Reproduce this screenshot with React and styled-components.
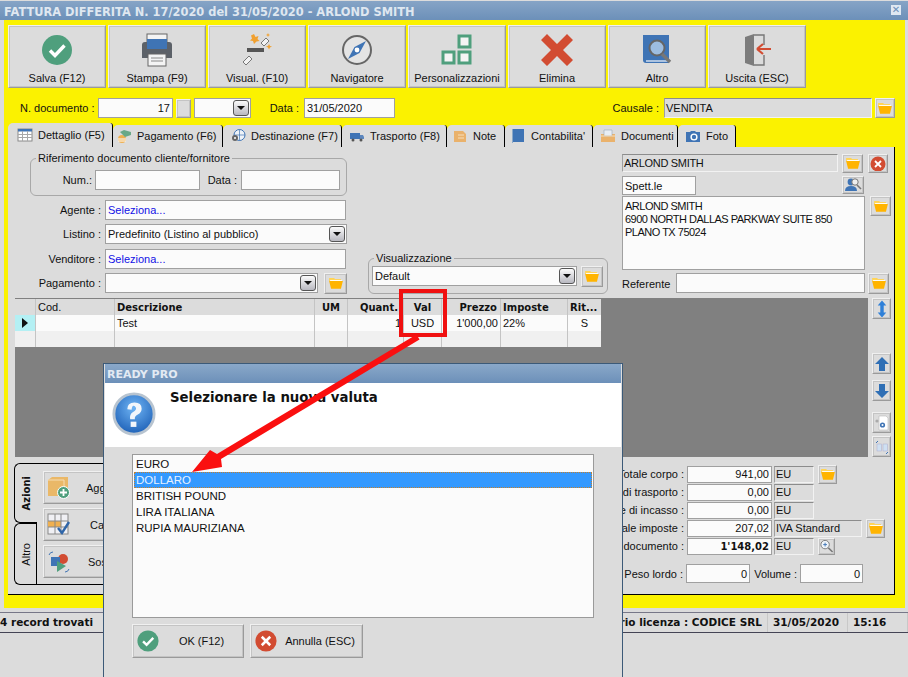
import React from 'react'
import styled, { createGlobalStyle, css } from 'styled-components'

const GlobalStyle = createGlobalStyle`
  html, body { margin: 0; padding: 0; background: #dcdcdc; }
  body {
    font-family: "Liberation Sans", "DejaVu Sans", sans-serif;
    font-size: 11px;
    color: #111;
  }
`

const boldText = css`
  font-family: "DejaVu Sans", sans-serif;
  font-size: 10px;
  font-weight: bold;
`

const Screen = styled.div`
  position: relative;
  width: 908px;
  height: 677px;
  overflow: hidden;
  background: #dcdcdc;
`

const TitleBar = styled.div`
  box-sizing: border-box;
  height: 19px;
  margin-top: 1px;
  padding: 2px 4px 0;
  display: flex;
  align-items: center;
  justify-content: space-between;
  background: linear-gradient(#86a4c6, #6c90b9);
  color: #dfe7f0;
  font-family: "DejaVu Sans", sans-serif;
  font-weight: bold;
  font-size: 11.4px;
`

const CloseMark = styled.span`
  width: 10px;
  height: 10px;
  margin: -3px 3px 0 0;
  background: #dfe8f2;
  color: #6c90b9;
  font-size: 10px;
  line-height: 10px;
  text-align: center;
`

const YellowFrame = styled.div`
  margin-left: 4px;
  width: 901px;
  height: 588px;
  padding: 5px 0 0 4px;
  box-sizing: border-box;
  background: #fbf200;
`

const Toolbar = styled.div`
  display: flex;
  gap: 2px;
`

const Bevel = styled.button`
  box-sizing: border-box;
  padding: 0;
  font: inherit;
  color: inherit;
  background: #dcdcdc;
  border: 1px solid;
  border-color: #f0f0f0 #9a9a9a #9a9a9a #f0f0f0;
  outline: 1px solid #c4c4c4;
  outline-offset: -2px;
  display: flex;
  align-items: center;
  justify-content: center;
  flex: none;
`

const ToolButton = styled(Bevel)`
  width: 98px;
  height: 63px;
  flex-direction: column;
  justify-content: flex-start;
  padding-top: 7px;
  gap: 5px;
  svg { width: 34px; height: 34px; }
`

const SmallButton = styled(Bevel)`
  width: ${p => p.$w || 21}px;
  height: ${p => p.$h || 21}px;
  margin-left: ${p => p.$ml || 0}px;
  margin-top: ${p => p.$mt || 0}px;
`

const DocRow = styled.div`
  display: flex;
  align-items: center;
  height: 20px;
  margin-top: 10px;
  padding-left: 12px;
`

const Label = styled.span`
  width: ${p => (p.$w ? `${p.$w}px` : 'auto')};
  margin-left: ${p => p.$ml || 0}px;
  margin-right: ${p => p.$mr || 0}px;
  text-align: ${p => p.$align || 'left'};
  white-space: nowrap;
  flex: none;
`

const Field = styled.div`
  box-sizing: border-box;
  flex: none;
  width: ${p => p.$w}px;
  height: ${p => p.$h || 20}px;
  margin-left: ${p => p.$ml || 0}px;
  margin-top: ${p => p.$mt || 0}px;
  padding: 0 ${p => (p.$readonly ? 1 : 2)}px;
  display: flex;
  align-items: center;
  justify-content: ${p => (p.$right ? 'flex-end' : 'flex-start')};
  background: ${p => (p.$readonly ? '#dcdcdc' : '#fbfbfb')};
  border: 1px solid #a0a0a0;
  border-top-color: ${p => (p.$readonly ? '#8c8c8c' : '#a0a0a0')};
  border-bottom-color: ${p => (p.$readonly ? '#f2f2f2' : '#a0a0a0')};
  border-right-color: ${p => (p.$readonly ? '#f2f2f2' : '#a0a0a0')};
  color: ${p => (p.$link ? '#1212e6' : 'inherit')};
  letter-spacing: ${p => (p.$tight ? '-0.3px' : 'normal')};
  ${p => p.$bold && boldText}
  white-space: nowrap;
  overflow: hidden;
`

const SelectBox = styled(Field)`
  justify-content: space-between;
  padding-right: 1px;
`

const DropArrow = styled.span`
  box-sizing: border-box;
  width: 16px;
  height: 16px;
  flex: none;
  border: 1px solid #555;
  border-radius: 3px;
  background: linear-gradient(#fbfbfb, #b8b8c0);
  display: flex;
  align-items: center;
  justify-content: center;
  &::after {
    content: '';
    border: 4px solid transparent;
    border-top: 4px solid #111;
    border-bottom: 0;
  }
`

const Tabs = styled.div`
  display: flex;
  align-items: flex-end;
  height: 24px;
  margin-top: 5px;
`

const Tab = styled.div`
  box-sizing: border-box;
  width: ${p => p.$w}px;
  height: ${p => (p.$active ? 24 : 22)}px;
  padding-left: ${p => p.$pad}px;
  display: flex;
  align-items: center;
  gap: 5px;
  background: #dcdcdc;
  border-top-left-radius: 5px;
  border-top-right-radius: 3px;
  border-right: 1px solid #000;
  white-space: nowrap;
  svg { width: 16px; height: 16px; flex: none; }
`

const Panel = styled.div`
  box-sizing: border-box;
  width: 887px;
  height: 448px;
  background: #dcdcdc;
  border-right: 1px solid #000;
  border-bottom: 1px solid #000;
`

const FormArea = styled.div`
  display: flex;
  height: 151px;
`

const LeftForm = styled.div`
  width: 339px;
  flex: none;
  padding-top: 5px;
`

const GroupBox = styled.fieldset`
  box-sizing: border-box;
  margin: ${p => p.$margin || 0};
  width: ${p => p.$w}px;
  height: ${p => p.$h}px;
  padding: ${p => p.$top || 0}px ${p => p.$pad || 0}px 0;
  border: 1px solid #a8a8a8;
  border-radius: 6px;
  display: flex;
  align-items: flex-start;
  legend {
    margin-left: ${p => p.$legend || 0}px;
    padding: 0 2px;
    line-height: 12px;
  }
  > span { line-height: 20px; }
`

const FormRow = styled.div`
  display: flex;
  align-items: center;
  height: 20px;
  margin-top: ${p => p.$mt ?? 5}px;
`

const RowLabel = styled(Label)`
  width: 93px;
  text-align: right;
  margin-right: 4px;
`

const MiddleForm = styled.div`
  width: 240px;
  margin-left: 21px;
  flex: none;
  align-self: flex-end;
  padding-bottom: 4px;
`

const RightForm = styled.div`
  margin-left: 14px;
  flex: 1;
  padding-top: 7px;
`

const RightRow = styled.div`
  display: flex;
  align-items: flex-start;
  margin-top: ${p => p.$mt || 0}px;
  > span { line-height: 22px; }
`

const AddressBox = styled(Field)`
  display: block;
  padding: 3px 2px;
  line-height: 13px;
  letter-spacing: -0.5px;
`

const GridZone = styled.div`
  display: flex;
  margin-left: 7px;
`

const GridBackdrop = styled.div`
  box-sizing: border-box;
  width: 853px;
  height: 159px;
  padding-top: 1px;
  background: #808080;
  flex: none;
`

const SideColumn = styled.div`
  margin-left: 4px;
  display: flex;
  flex-direction: column;
`

const DataGrid = styled.div`
  display: grid;
  grid-template-columns: 20px 78px 199px 32px 55px 37px 58px 66px 33px;
  grid-auto-rows: 16px;
  width: 586px;
  height: 48px;
  column-gap: 1px;
  background: #c4c4c4;
`

const HeadCell = styled.div`
  background: #dcdcdc;
  padding: 0 ${p => p.$pr || 2}px 0 2px;
  height: 16px;
  line-height: 17px;
  ${p => !p.$plain && boldText}
  text-align: ${p => p.$align || 'left'};
  white-space: nowrap;
  overflow: hidden;
`

const Cell = styled.div`
  background: ${p => (p.$indicator ? '#b4f0f4' : p.$empty ? '#f0f0f0' : '#fbfbfb')};
  padding: 0 2px;
  line-height: 16px;
  text-align: ${p => p.$align || 'left'};
  white-space: nowrap;
  overflow: hidden;
`

const Indicator = styled.span`
  display: block;
  margin: 3px 0 0 5px;
  width: 0;
  height: 0;
  border: 5px solid transparent;
  border-left: 6px solid #111;
  border-right: 0;
`

const BottomZone = styled.div`
  display: flex;
  height: 137px;
`

const SideTabs = styled.div`
  width: 22px;
  margin: 6px 0 0 6px;
  height: 122px;
  flex: none;
  display: flex;
  flex-direction: column;
  border-right: 1px solid #000;
`

const VerticalTab = styled.div`
  box-sizing: border-box;
  height: ${p => p.$h}px;
  margin-right: ${p => (p.$active ? -1 : 0)}px;
  border: 1px solid #000;
  border-right: 0;
  border-radius: 6px 0 0 6px;
  background: #dcdcdc;
  display: flex;
  align-items: center;
  justify-content: center;
  ${p => p.$active && boldText}
  span {
    writing-mode: vertical-rl;
    transform: rotate(180deg);
  }
`

const ActionColumn = styled.div`
  width: 300px;
  margin: 6px 0 0 -1px;
  padding: 7px 0 0 7px;
  height: 122px;
  box-sizing: border-box;
  flex: none;
  border-top: 1px solid #000;
  border-bottom: 1px solid #000;
  display: flex;
  flex-direction: column;
  gap: 4px;
`

const ActionButton = styled(Bevel)`
  width: 150px;
  height: 33px;
  justify-content: flex-start;
  padding-left: 3px;
  gap: ${p => p.$gap}px;
  svg { width: 24px; height: 24px; flex: none; }
`

const Totals = styled.div`
  margin-left: auto;
  padding-top: 8px;
  width: 310px;
  box-sizing: border-box;
  flex: none;
`

const TotalRow = styled.div`
  display: flex;
  align-items: center;
  height: 18px;
`

const TotalLabel = styled(Label)`
  width: 100px;
  text-align: right;
  margin-right: 3px;
`

const WeightRow = styled(TotalRow)`
  margin-top: 9px;
  height: 19px;
`

const WeightLabel = styled(Label)`
  width: 99px;
  text-align: right;
  margin-right: 3px;
`

const StatusBar = styled.div`
  box-sizing: border-box;
  display: flex;
  height: 21px;
  margin-top: 4px;
  border-top: 1px solid #778;
  border-bottom: 1px solid #445;
  background: #dcdcdc;
  ${boldText}
  font-size: 10.5px;
`

const StatusCell = styled.div`
  box-sizing: border-box;
  width: ${p => (p.$w ? `${p.$w}px` : 'auto')};
  flex: ${p => (p.$w ? 'none' : 1)};
  padding: 0 5px;
  line-height: 19px;
  border-right: 1px solid #c8c8c8;
  white-space: nowrap;
  overflow: hidden;
  display: flex;
`

const RecordsText = styled.span`
  margin-left: -5px;
  flex: 1;
`

const Callout = styled.svg`
  position: absolute;
  left: 0;
  top: 0;
  z-index: 5;
  pointer-events: none;
`

const Dialog = styled.div`
  position: absolute;
  left: 103px;
  top: 363px;
  width: 520px;
  height: 320px;
  box-sizing: border-box;
  background: #dcdcdc;
  border: 1px solid #3c5a78;
  z-index: 3;
`

const DialogTitle = styled.div`
  box-sizing: border-box;
  height: 19px;
  margin: 0 1px;
  padding: 2px 0 0 2px;
  background: linear-gradient(#8aa8c9, #6c90b9);
  color: #e3eaf3;
  font-family: "DejaVu Sans", sans-serif;
  font-weight: bold;
  line-height: 17px;
  font-size: 11px;
`

const DialogHead = styled.div`
  display: flex;
  height: 64px;
  margin: 0 1px;
  padding-left: 7px;
  background: #fff;
  svg { width: 44px; height: 44px; margin-top: 9px; flex: none; }
`

const DialogQuestion = styled.div`
  margin: 7px 0 0 14px;
  font-family: "DejaVu Sans", sans-serif;
  font-size: 13.3px;
  font-weight: bold;
`

const ListBox = styled.div`
  box-sizing: border-box;
  width: 462px;
  height: 164px;
  margin: 7px 0 0 28px;
  padding: 1px;
  background: #fbfbfb;
  border: 1px solid #9a9a9a;
  font-size: 11.5px;
`

const ListItem = styled.div`
  box-sizing: border-box;
  height: 16px;
  line-height: 16px;
  padding-left: 2px;
  background: ${p => (p.$selected ? '#3399ff' : 'transparent')};
  color: ${p => (p.$selected ? '#e8f2ff' : 'inherit')};
  outline: ${p => (p.$selected ? '1px dotted #c08030' : 'none')};
  outline-offset: -1px;
`

const DialogActions = styled.div`
  display: flex;
  gap: 6px;
  margin: 6px 0 0 28px;
`

const DialogButton = styled(Bevel)`
  width: ${p => p.$w}px;
  height: 34px;
  justify-content: flex-start;
  padding-left: 3px;
  span { flex: 1; text-align: center; }
  svg { width: 24px; height: 24px; flex: none; }
`

const CheckIcon = () => (
  <svg viewBox="0 0 34 34">
    <circle cx="17" cy="17" r="15" fill="#4f9f7d" />
    <path d="M10 17.5l5 5 9.5-10" fill="none" stroke="#fff" strokeWidth="3.4" />
  </svg>
)

const CrossCircleIcon = () => (
  <svg viewBox="0 0 34 34">
    <circle cx="17" cy="17" r="15" fill="#d24c32" />
    <path d="M11 11l12 12M23 11L11 23" stroke="#fff" strokeWidth="3.6" />
  </svg>
)

const PrinterIcon = () => (
  <svg viewBox="0 0 34 34">
    <rect x="7" y="1" width="20" height="8" fill="#f4f4f4" stroke="#666" />
    <path d="M2 12q0-3 3-3h24q3 0 3 3v13H2z" fill="#5c6168" />
    <rect x="7" y="6" width="20" height="10" fill="#3f74b5" />
    <rect x="8" y="21" width="18" height="12" fill="#f4f4f4" stroke="#666" />
    <path d="M11 25h12M11 28h12" stroke="#888" />
  </svg>
)

const WandIcon = () => (
  <svg viewBox="0 0 34 34">
    <rect x="7" y="15" width="17" height="4" fill="#555" />
    <path d="M21 10l5-5 3 3-5 5zM3 29l6-6 3 3-6 6z" fill="#f2f2f2" stroke="#777" />
    <path d="M14 1l1.5 3 3-1-1 3 2 2-3 .5L14 11l-1-3-3-.5 2-2-1-3zM29 11l1 2 2 .5-2 1-1 2-1-2-2-1 2-.5zM28 0l.7 1.5 1.5.5-1.5.5-.7 1.5-.7-1.5-1.5-.5 1.5-.5z" fill="#f0a030" />
  </svg>
)

const CompassIcon = () => (
  <svg viewBox="0 0 34 34">
    <circle cx="17" cy="17" r="14" fill="#e4e4e4" stroke="#666" strokeWidth="2" />
    <path d="M26 8l-6.5 12L8 26l6.5-12z" fill="#3f74b5" />
    <circle cx="17" cy="17" r="2.4" fill="#fff" />
  </svg>
)

const SquaresIcon = () => (
  <svg viewBox="0 0 34 34" fill="#f4f4f4" stroke="#4f9f7d" strokeWidth="3">
    <rect x="19" y="3" width="11" height="11" />
    <rect x="3" y="19" width="11" height="11" />
    <rect x="19" y="19" width="11" height="11" />
  </svg>
)

const CrossIcon = () => (
  <svg viewBox="0 0 34 34">
    <path d="M7 1l10 10L27 1l6 6-10 10 10 10-6 6-10-10L7 33l-6-6 10-10L1 7z" fill="#d24c32" />
  </svg>
)

const BookIcon = () => (
  <svg viewBox="0 0 34 34">
    <path d="M3 2h26v28H6q-3 0-3-3z" fill="#3f74b5" />
    <path d="M6 28h23" stroke="#dce6f2" strokeWidth="1.4" />
    <circle cx="17" cy="15" r="7.5" fill="#9dbde0" stroke="#666" strokeWidth="2" />
    <path d="M22 21l8 8" stroke="#777" strokeWidth="3.4" />
  </svg>
)

const DoorIcon = () => (
  <svg viewBox="0 0 34 34">
    <path d="M5 4l9-3v32l-9-3z" fill="#7c7c7c" />
    <path d="M14 2h10v10M24 22v10H14" fill="none" stroke="#777" strokeWidth="1.4" />
    <path d="M17 16h14M17 16l6-5M17 16l6 5" fill="none" stroke="#d24c32" strokeWidth="2.2" />
  </svg>
)

const FolderIcon = ({ size = 16 }) => (
  <svg viewBox="0 0 16 13" width={size} height={size * 0.8}>
    <path d="M1 1h5l1 1h6v2H1z" fill="#ffd456" />
    <path d="M1 4h14l-2 8H3z" fill="#ffb400" />
    <path d="M2 3h12v1H2z" fill="#fff" />
  </svg>
)

const FolderButton = props => (
  <SmallButton {...props}>
    <FolderIcon />
  </SmallButton>
)

const TableTabIcon = () => (
  <svg viewBox="0 0 16 16">
    <rect x="1" y="2" width="14" height="12" fill="#fff" stroke="#8a8a8a" />
    <rect x="1" y="2" width="14" height="2.5" fill="#3f74b5" />
    <path d="M1 7.5h14M1 10.5h14M5.5 4v10M10.5 4v10" stroke="#a8a8a8" />
  </svg>
)

const CoinsTabIcon = () => (
  <svg viewBox="0 0 16 16">
    <ellipse cx="6" cy="11" rx="4" ry="4" fill="#f0b050" />
    <path d="M2 11h8M2 13h8" stroke="#fff" />
    <path d="M4 4l4-2 7 2v3l-6 2z" fill="#6aa888" />
  </svg>
)

const GlobeTabIcon = () => (
  <svg viewBox="0 0 16 16">
    <circle cx="9.5" cy="7" r="5.5" fill="#eef3f8" stroke="#3f74b5" />
    <path d="M4 7h11M9.5 1.5v11" stroke="#3f74b5" strokeWidth=".7" />
    <circle cx="5" cy="10" r="3" fill="#666" />
    <circle cx="5" cy="10" r="1" fill="#fff" />
  </svg>
)

const TruckTabIcon = () => (
  <svg viewBox="0 0 16 16">
    <rect x="1" y="5" width="10" height="6" fill="#3f74b5" />
    <path d="M11 7h3l1 2v2h-4z" fill="#5c86bd" />
    <circle cx="4" cy="12" r="1.5" fill="#555" />
    <circle cx="12" cy="12" r="1.5" fill="#555" />
  </svg>
)

const NoteTabIcon = () => (
  <svg viewBox="0 0 16 16">
    <path d="M2 3h9l3 3v8H2z" fill="#eab26c" />
    <path d="M6 7h6M6 10h6" stroke="#f7dfbc" />
  </svg>
)

const BookTabIcon = () => (
  <svg viewBox="0 0 16 16">
    <path d="M2 1h12v13H2z" fill="#3f74b5" />
    <path d="M2 1h1v14H2z" fill="#8aa8c9" />
  </svg>
)

const FileTabIcon = () => (
  <svg viewBox="0 0 16 16">
    <path d="M1 6h14v8H1z" fill="#eab26c" />
    <path d="M4 2h8v6H4z" fill="#e8eef5" stroke="#9ab" strokeWidth=".6" />
    <path d="M1 8h14" stroke="#f7dfbc" />
  </svg>
)

const CameraTabIcon = () => (
  <svg viewBox="0 0 16 16">
    <path d="M1 4h4l1-1h4l1 1h4v10H1z" fill="#3f74b5" />
    <circle cx="9" cy="9" r="3.6" fill="#fff" />
    <circle cx="9" cy="9" r="2.2" fill="#3f74b5" />
  </svg>
)

const AddBoxIcon = () => (
  <svg viewBox="0 0 24 24">
    <path d="M1 4l4-3h16v16l-4 3H1z" fill="#eab868" />
    <path d="M1 4h16v16" fill="none" stroke="#f6ddb4" />
    <circle cx="16.5" cy="16.5" r="6" fill="#4f9f7d" stroke="#fff" />
    <path d="M13 16.5h7M16.5 13v7" stroke="#fff" strokeWidth="1.8" />
  </svg>
)

const TableCheckIcon = () => (
  <svg viewBox="0 0 24 24">
    <rect x="1" y="1" width="20" height="20" fill="#f0f0f4" stroke="#888" />
    <rect x="1" y="8" width="13" height="6" fill="#f0b050" />
    <path d="M1 8h20M1 14h20M8 1v20M14 1v20" stroke="#888" />
    <path d="M11 15l4 5 7-11" fill="none" stroke="#2f65a8" strokeWidth="2.4" />
  </svg>
)

const SwapIcon = () => (
  <svg viewBox="0 0 24 24">
    <circle cx="16" cy="9" r="5" fill="#d24c32" />
    <rect x="4" y="7" width="9" height="9" fill="#3f74b5" />
    <path d="M10 11l9 5-9 6z" fill="#4f9f7d" />
    <path d="M2 5q1-3 4-3M22 19q-1 3-4 3" fill="none" stroke="#3f74b5" />
  </svg>
)

const ClientIcon = () => (
  <svg viewBox="0 0 18 16" width="18" height="16">
    <circle cx="7" cy="5" r="3.4" fill="#3f74b5" />
    <path d="M1 14q0-5 6-5t6 5z" fill="#3f74b5" />
    <circle cx="11" cy="5" r="3.2" fill="#eee" stroke="#777" />
    <path d="M13 8l4 4" stroke="#777" strokeWidth="1.6" />
  </svg>
)

const UpDownIcon = () => (
  <svg viewBox="0 0 14 20" width="12" height="18">
    <path d="M7 0l5 6H9v8h3l-5 6-5-6h3V6H2z" fill="#2f80d8" />
  </svg>
)

const ArrowIcon = ({ down }) => (
  <svg viewBox="0 0 16 16" width="16" height="16">
    <path d={down ? 'M5 1h6v7h4l-7 7-7-7h4z' : 'M5 15h6V8h4L8 1 1 8h4z'} fill="#2f6fb5" />
  </svg>
)

const GearPageIcon = () => (
  <svg viewBox="0 0 16 16" width="16" height="16">
    <path d="M5 1h7l2 2v12H5z" fill="#fff" stroke="#bbb" strokeWidth=".6" />
    <circle cx="8.5" cy="10" r="2.6" fill="#3f74b5" />
    <circle cx="8.5" cy="10" r="1" fill="#fff" />
    <circle cx="3" cy="6" r="1.6" fill="#aaa" />
  </svg>
)

const CopyPagesIcon = () => (
  <svg viewBox="0 0 16 16" width="16" height="16">
    <rect x="3" y="5" width="4.5" height="7" fill="#cfe0f2" stroke="#aac" strokeWidth=".5" />
    <rect x="9" y="5" width="4.5" height="7" fill="#cfe0f2" stroke="#aac" strokeWidth=".5" />
    <path d="M2 4l2-2M14 13l-2 2" stroke="#3f74b5" />
  </svg>
)

const ZoomIcon = () => (
  <svg viewBox="0 0 16 16" width="16" height="16">
    <circle cx="6.5" cy="6.5" r="4.5" fill="#eef3f8" stroke="#777" />
    <path d="M4.5 6.5h4M6.5 4.5v4" stroke="#3f74b5" />
    <path d="M10 10l4.5 4.5" stroke="#777" strokeWidth="1.6" />
  </svg>
)

const RemoveIcon = () => (
  <svg viewBox="0 0 16 16" width="16" height="16">
    <circle cx="8" cy="8" r="7.5" fill="#d24c32" />
    <path d="M5 5l6 6M11 5l-6 6" stroke="#fff" strokeWidth="1.8" />
  </svg>
)

const QuestionIcon = () => (
  <svg viewBox="0 0 46 46">
    <defs>
      <radialGradient id="qball" cx="50%" cy="35%" r="65%">
        <stop offset="0" stopColor="#6fb4f4" />
        <stop offset="1" stopColor="#1f62b8" />
      </radialGradient>
    </defs>
    <circle cx="23" cy="23" r="21" fill="url(#qball)" stroke="#b8c4d0" strokeWidth="3" />
    <path d="M16 18q0-7 7.5-7t7.5 6.5q0 4-4 6t-3 5h-5q-1-5 3-7.5t3-4.5q-1-2-2.5-2t-2 4z" fill="#f2f6fb" />
    <rect x="19.5" y="31" width="6" height="5.5" fill="#f2f6fb" />
  </svg>
)

const tools = [
  ['Salva (F12)', CheckIcon],
  ['Stampa (F9)', PrinterIcon],
  ['Visual. (F10)', WandIcon],
  ['Navigatore', CompassIcon],
  ['Personalizzazioni', SquaresIcon],
  ['Elimina', CrossIcon],
  ['Altro', BookIcon],
  ['Uscita (ESC)', DoorIcon],
]

const tabs = [
  ['Dettaglio (F5)', TableTabIcon, 105, 9],
  ['Pagamento (F6)', CoinsTabIcon, 110, 3],
  ['Destinazione (F7)', GlobeTabIcon, 119, 7],
  ['Trasporto (F8)', TruckTabIcon, 105, 7],
  ['Note', NoteTabIcon, 58, 5],
  ["Contabilita'", BookTabIcon, 88, 5],
  ['Documenti', FileTabIcon, 85, 7],
  ['Foto', CameraTabIcon, 58, 7],
]

const totals = [
  ['Totale corpo :', '941,00', 'EU', 40, 'folder'],
  ['Spese di trasporto :', '0,00', 'EU', 40],
  ['Spese di incasso :', '0,00', 'EU', 40],
  ['Totale imposte :', '207,02', 'IVA Standard', 88, 'folder'],
  ['Totale documento :', "1'148,02", 'EU', 40, 'zoom'],
]

const currencies = ['EURO', 'DOLLARO', 'BRITISH POUND', 'LIRA ITALIANA', 'RUPIA MAURIZIANA']

export default function App() {
  return (
    <Screen>
      <GlobalStyle />
      <TitleBar>
        FATTURA DIFFERITA N. 17/2020 del 31/05/2020 - ARLOND SMITH
        <CloseMark>✕</CloseMark>
      </TitleBar>
      <YellowFrame>
        <Toolbar>
          {tools.map(([text, Icon]) => (
            <ToolButton key={text}>
              <Icon />
              {text}
            </ToolButton>
          ))}
        </Toolbar>
        <DocRow>
          <Label $w={78}>N. documento :</Label>
          <Field $w={75} $right>17</Field>
          <SmallButton $w={15} $h={19} $ml={3} />
          <SelectBox $w={57} $ml={3}><span /><DropArrow /></SelectBox>
          <Label $w={48} $align="right" $mr={5}>Data :</Label>
          <Field $w={91}>31/05/2020</Field>
          <Label $w={264} $align="right" $mr={5}>Causale :</Label>
          <Field $w={208} $readonly>VENDITA</Field>
          <FolderButton $w={20} $h={20} $ml={3} />
        </DocRow>
        <Tabs>
          {tabs.map(([text, Icon, w, pad], i) => (
            <Tab key={text} $w={w} $pad={pad} $active={i === 0}>
              <Icon />
              {text}
            </Tab>
          ))}
        </Tabs>
        <Panel>
          <FormArea>
            <LeftForm>
              <GroupBox $w={317} $h={44} $margin="0 0 0 22px" $pad={5} $top={6}>
                <legend>Riferimento documento cliente/fornitore</legend>
                <Label $w={56} $align="right" $mr={3}>Num.:</Label>
                <Field $w={105} />
                <Label $w={37} $align="right" $mr={4}>Data :</Label>
                <Field $w={99} />
              </GroupBox>
              <FormRow $mt={4}>
                <RowLabel>Agente :</RowLabel>
                <Field $w={241} $link>Seleziona...</Field>
              </FormRow>
              <FormRow $mt={4}>
                <RowLabel>Listino :</RowLabel>
                <SelectBox $w={242}>Predefinito (Listino al pubblico)<DropArrow /></SelectBox>
              </FormRow>
              <FormRow>
                <RowLabel>Venditore :</RowLabel>
                <Field $w={241} $link>Seleziona...</Field>
              </FormRow>
              <FormRow $mt={4}>
                <RowLabel>Pagamento :</RowLabel>
                <SelectBox $w={213}><span /><DropArrow /></SelectBox>
                <FolderButton $w={23} $ml={6} />
              </FormRow>
            </LeftForm>
            <MiddleForm>
              <GroupBox $w={240} $h={42} $pad={3} $top={2} $legend={2}>
                <legend>Visualizzazione</legend>
                <SelectBox $w={205}>Default<DropArrow /></SelectBox>
                <FolderButton $w={22} $ml={4} />
              </GroupBox>
            </MiddleForm>
            <RightForm>
              <RightRow>
                <Field $w={216} $h={18} $readonly $tight>ARLOND SMITH</Field>
                <FolderButton $w={21} $ml={4} $h={19} />
                <SmallButton $w={20} $h={19} $ml={5}><RemoveIcon /></SmallButton>
              </RightRow>
              <RightRow $mt={3}>
                <Field $w={74} $h={19}>Spett.le</Field>
                <SmallButton $w={22} $h={18} $ml={146}><ClientIcon /></SmallButton>
              </RightRow>
              <RightRow $mt={1}>
                <AddressBox $w={243} $h={74}>
                  ARLOND SMITH<br />
                  6900 NORTH DALLAS PARKWAY SUITE 850<br />
                  PLANO TX 75024
                </AddressBox>
                <FolderButton $w={21} $h={20} $ml={5} />
              </RightRow>
              <RightRow $mt={3}>
                <Label $w={54}>Referente</Label>
                <Field $w={189} />
                <FolderButton $w={21} $ml={3} />
              </RightRow>
            </RightForm>
          </FormArea>
          <GridZone>
            <GridBackdrop>
              <DataGrid>
                <HeadCell />
                <HeadCell $plain>Cod.</HeadCell>
                <HeadCell>Descrizione</HeadCell>
                <HeadCell $align="center">UM</HeadCell>
                <HeadCell $align="right" $pr={5}>Quant.</HeadCell>
                <HeadCell $align="center">Val</HeadCell>
                <HeadCell $align="right" $pr={3}>Prezzo</HeadCell>
                <HeadCell>Imposte</HeadCell>
                <HeadCell>Rit...</HeadCell>
                <Cell $indicator><Indicator /></Cell>
                <Cell />
                <Cell>Test</Cell>
                <Cell />
                <Cell $align="right">1</Cell>
                <Cell $align="center">USD</Cell>
                <Cell $align="right">1'000,00</Cell>
                <Cell>22%</Cell>
                <Cell $align="center">S</Cell>
                {Array.from({ length: 9 }, (_, i) => <Cell key={i} $empty />)}
              </DataGrid>
            </GridBackdrop>
            <SideColumn>
              <SmallButton $w={19} $h={21}><UpDownIcon /></SmallButton>
              <SmallButton $w={19} $h={21} $mt={34}><ArrowIcon /></SmallButton>
              <SmallButton $w={19} $h={21} $mt={6}><ArrowIcon down /></SmallButton>
              <SmallButton $w={19} $h={21} $mt={11}><GearPageIcon /></SmallButton>
              <SmallButton $w={19} $h={21} $mt={3}><CopyPagesIcon /></SmallButton>
            </SideColumn>
          </GridZone>
          <BottomZone>
            <SideTabs>
              <VerticalTab $active $h={60}><span>Azioni</span></VerticalTab>
              <VerticalTab $h={62}><span>Altro</span></VerticalTab>
            </SideTabs>
            <ActionColumn>
              <ActionButton $gap={15}><AddBoxIcon />Aggiungi</ActionButton>
              <ActionButton $gap={19}><TableCheckIcon />Cancella</ActionButton>
              <ActionButton $gap={17}><SwapIcon />Sostituisci</ActionButton>
            </ActionColumn>
            <Totals>
              {totals.map(([label, value, unit, w, extra]) => (
                <TotalRow key={label}>
                  <TotalLabel>{label}</TotalLabel>
                  <Field $w={85} $h={17} $right $bold={label.includes('documento')}>{value}</Field>
                  <Field $w={w} $h={17} $readonly $ml={2}>{unit}</Field>
                  {extra === 'folder' && <FolderButton $w={19} $h={19} $ml={4} />}
                  {extra === 'zoom' && <SmallButton $w={17} $h={17} $ml={4}><ZoomIcon /></SmallButton>}
                </TotalRow>
              ))}
              <WeightRow>
                <WeightLabel>Peso lordo :</WeightLabel>
                <Field $w={64} $h={19} $right>0</Field>
                <Label $w={47} $align="right" $mr={3}>Volume :</Label>
                <Field $w={63} $h={19} $right>0</Field>
              </WeightRow>
            </Totals>
          </BottomZone>
        </Panel>
      </YellowFrame>
      <StatusBar>
        <StatusCell>
          <RecordsText>4 record trovati</RecordsText>
          Intestatario licenza : CODICE SRL
        </StatusCell>
        <StatusCell $w={80}>31/05/2020</StatusCell>
        <StatusCell $w={60}>15:16</StatusCell>
      </StatusBar>
      <Dialog>
        <DialogTitle>READY PRO</DialogTitle>
        <DialogHead>
          <QuestionIcon />
          <DialogQuestion>Selezionare la nuova valuta</DialogQuestion>
        </DialogHead>
        <ListBox>
          {currencies.map(name => (
            <ListItem key={name} $selected={name === 'DOLLARO'}>{name}</ListItem>
          ))}
        </ListBox>
        <DialogActions>
          <DialogButton $w={112}><CheckIcon /><span>OK (F12)</span></DialogButton>
          <DialogButton $w={113}><CrossCircleIcon /><span>Annulla (ESC)</span></DialogButton>
        </DialogActions>
      </Dialog>
      <Callout width="908" height="677" viewBox="0 0 908 677">
        <rect x="401" y="291" width="44" height="44" fill="none" stroke="#f01010" strokeWidth="4" />
        <polygon
          points="192,472 210,450 217,454 416.5,334.4 419.5,339.6 221,459 222,467"
          fill="#fa0f0f"
        />
      </Callout>
    </Screen>
  )
}
